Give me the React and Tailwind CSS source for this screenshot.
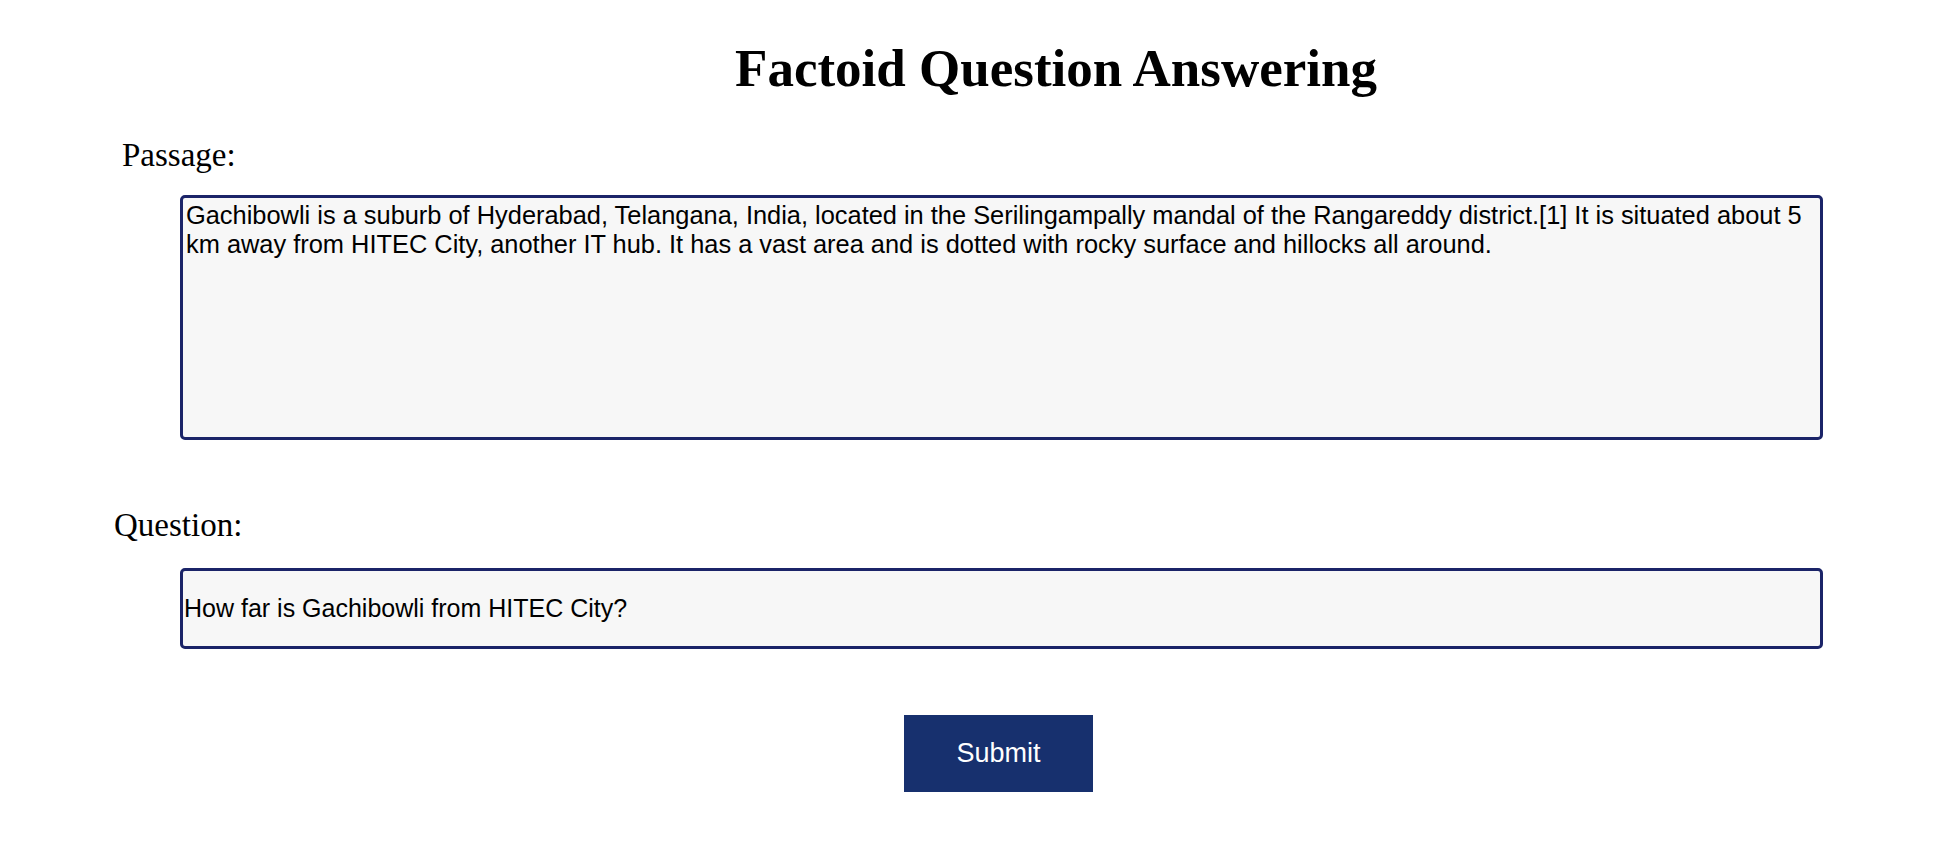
const PASSAGE =
  'Gachibowli is a suburb of Hyderabad, Telangana, India, located in the Serilingampally mandal of the Rangareddy district.[1] It is situated about 5 km away from HITEC City, another IT hub. It has a vast area and is dotted with rocky surface and hillocks all around.';

const QUESTION = 'How far is Gachibowli from HITEC City?';

const serif = "font-['Liberation_Serif','Times_New_Roman',serif]";
const sans = "font-['Liberation_Sans',Arial,sans-serif]";

const App = () => {
  return (
    <div className="min-h-[866px] w-full bg-white text-black">
      <h1 className={`${serif} pt-[38px] pl-[162px] text-center text-[53px] font-bold leading-[60px]`}>
        Factoid Question Answering
      </h1>

      <form className="flex flex-col" onSubmit={(e) => e.preventDefault()}>
        <label className={`${serif} mt-[38px] ml-[122px] text-[33px] leading-[38px]`}>Passage:</label>
        <div className="mt-[21px] pl-[180px] pr-[127px]">
          <textarea
            readOnly
            defaultValue={PASSAGE}
            className={`${sans} block h-[245px] w-full resize-none rounded-[5px] border-[3px] border-[#1b2468] bg-[#f7f7f7] px-[3px] py-[3px] text-[25.4px] leading-[28.7px] text-black outline-none`}
          />
        </div>

        <label className={`${serif} mt-[66px] ml-[114px] text-[33px] leading-[38px]`}>Question:</label>
        <div className="mt-[24px] pl-[180px] pr-[127px]">
          <input
            readOnly
            defaultValue={QUESTION}
            className={`${sans} block h-[81px] w-full rounded-[5px] border-[3px] border-[#1b2468] bg-[#f7f7f7] px-[1px] text-[25px] text-black outline-none`}
          />
        </div>

        <div className="mt-[66px] flex pl-[904px]">
          <button
            type="submit"
            className={`${sans} h-[77px] w-[189px] bg-[#17306e] text-[27px] text-white`}
          >
            Submit
          </button>
        </div>
      </form>
    </div>
  );
};

export default App;
